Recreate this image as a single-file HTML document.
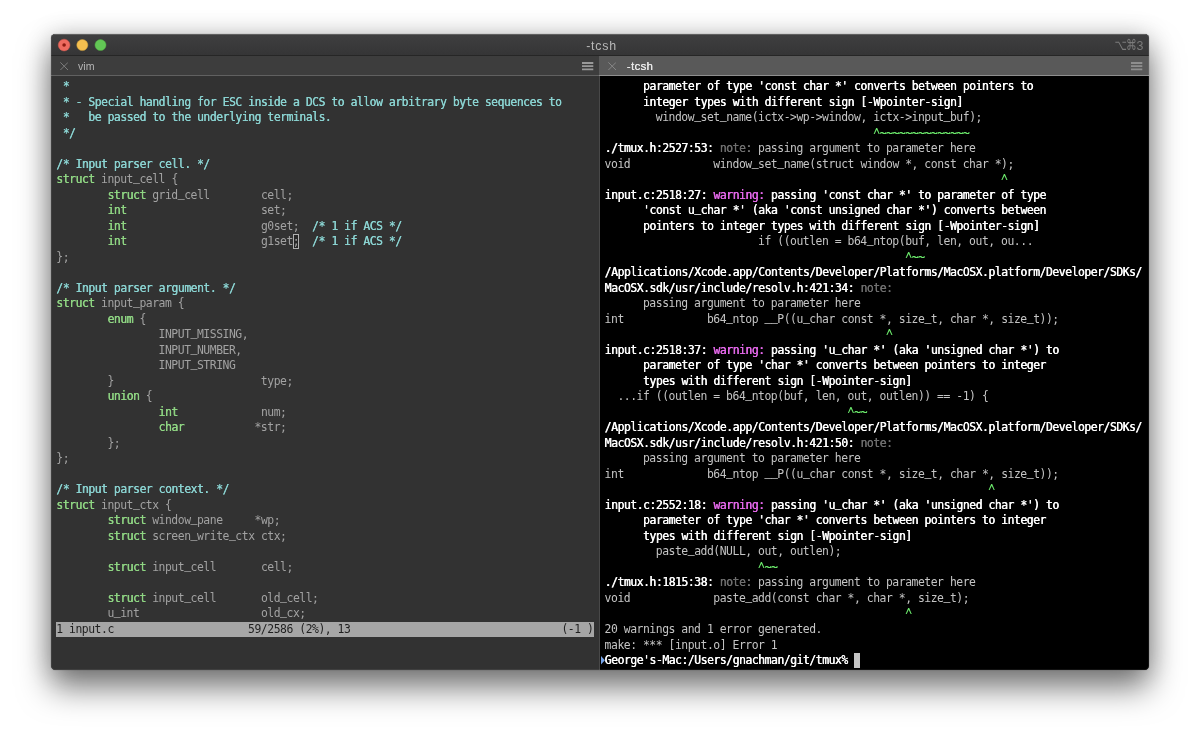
<!DOCTYPE html>
<html lang="en"><head><meta charset="utf-8"><title>-tcsh</title>
<style>
html,body{margin:0;padding:0;background:#fff;}
body{width:1200px;height:738px;position:relative;overflow:hidden;font-family:"Liberation Sans","DejaVu Sans",sans-serif;}
#win{position:absolute;left:51.2px;top:34.2px;width:1097.5px;height:636.1px;border-radius:4.5px;overflow:hidden;background:#323232;}
#shadow{position:absolute;left:51.2px;top:34.2px;width:1097.5px;height:636.1px;border-radius:4.5px;
 box-shadow:0 18px 32px rgba(0,0,0,.50),0 0 1px rgba(0,0,0,.55),0 1px 26px rgba(0,0,0,.20);}
#tbar{position:absolute;left:0;top:0;width:100%;height:21.8px;background:linear-gradient(#3f3f40,#353536);border-bottom:1px solid #262626;box-sizing:border-box;box-shadow:inset 0 1px 0 #555;}
#tls{position:absolute;left:0;top:0;}
#title{position:absolute;left:1.6px;width:100%;top:4.7px;text-align:center;font-size:12.4px;line-height:14px;color:#b8b8b8;letter-spacing:.75px;}
#kbd{position:absolute;right:5.4px;top:4.4px;font-size:12.4px;line-height:14px;color:#7b7b7b;white-space:nowrap;}
#kbd .sym{display:inline-block;font-family:"DejaVu Sans","Liberation Sans",sans-serif;font-size:11px;letter-spacing:-.8px;transform-origin:100% 78%;transform:scale(.98,1.36);margin-right:.6px;}
.pt{position:absolute;top:21.8px;height:20px;box-sizing:border-box;font-size:10.6px;line-height:19px;}
#pt1{left:0;width:548px;background:#3d3d3d;border-bottom:1px solid #616161;color:#b4b4b4;}
#pt2{left:547.8px;width:549.7px;background:#595959;border-bottom:1px solid #8f8f8f;color:#eaeaea;font-size:11.3px;}
.pt .nm{position:absolute;top:.9px;}
.pt svg{position:absolute;}
#lp{position:absolute;left:0;top:41.8px;width:548px;height:595px;background:#323232;}
#dv{position:absolute;left:547.8px;top:41.8px;width:1.3px;height:595px;background:#484848;}
#rp{position:absolute;left:549px;top:41.8px;width:549px;height:595px;background:#000;}
.ln{position:absolute;white-space:pre;font-family:"DejaVu Sans Mono", "Liberation Mono", monospace;font-size:11.400px;letter-spacing:-0.4634px;line-height:15.51px;height:15.51px;}
.c{color:#8ad3d1;text-shadow:.3px 0 0 #8ad3d1;}
.k{color:#8fd683;text-shadow:.3px 0 0 #8fd683;}
.n{color:#a2a2a2;}
.cur{color:#a2a2a2;}
.curbox{position:absolute;box-sizing:border-box;border:.9px solid #b0b0b0;background:rgba(0,0,0,.22);}
.status{position:absolute;height:15.51px;background:#a6a6a6;}
.st{color:#1f1f1f;}
.b{color:#fff;text-shadow:.4px 0 0 #fff;}
.r{color:#c4c4c4;}
.g{color:#6be86b;text-shadow:.35px 0 0 #6be86b;}
.gc{color:#6be86b;display:inline-block;transform-origin:50% 3.8px;transform:translateY(1.2px) scaleY(1.85);}
.m{color:#e468ea;text-shadow:.4px 0 0 #e468ea;}
.d{color:#6f6f6f;text-shadow:.35px 0 0 #6f6f6f;}
.blk{}
.pblk{position:absolute;background:#c4c4c4;}
#mark{position:absolute;}

#txt{position:absolute;left:0;top:0;width:1200px;height:738px;}
#edge{position:absolute;left:0;top:0;width:100%;height:100%;border-radius:4.5px;box-shadow:inset 0 0 0 .8px rgba(255,255,255,.09);pointer-events:none;}
#page{will-change:transform;position:absolute;left:0;top:0;width:1200px;height:738px;background:#fff;overflow:hidden;}
.u{position:relative;top:-2.1px;text-shadow:0 .45px 0 currentColor;}

</style></head>
<body>
<div id="page">
<div id="shadow"></div>
<div id="win">
 <div id="tbar">
  <svg id="tls" width="60" height="20" viewBox="0 0 60 20"><circle cx="13.1" cy="11.05" r="5.9" fill="#ee6a5f" stroke="#cf5a50" stroke-width=".5"/><circle cx="13.1" cy="11.05" r="1.8" fill="#8c1a10"/><circle cx="31.3" cy="11.05" r="5.55" fill="#f5bf4f" stroke="#d3a23f" stroke-width=".5"/><circle cx="49.5" cy="11.05" r="5.55" fill="#62c655" stroke="#52a845" stroke-width=".5"/></svg>
  <div id="title">-tcsh</div>
  <div id="kbd"><span class="sym">⌥⌘</span>3</div>
 </div>
 <div class="pt" id="pt1">
  <svg style="left:8.4px;top:6.3px" width="8.4" height="8.4" viewBox="0 0 9 9"><path d="M.4.4 8.6 8.6M8.6.4.4 8.6" stroke="#808080" stroke-width="1" fill="none"/></svg>
  <span class="nm" style="left:26.8px">vim</span>
  <svg style="left:530.5px;top:5.6px" width="12" height="9" viewBox="0 0 12 9"><path d="M0 1h11.3M0 4.2h11.3M0 7.4h11.3" stroke="#999" stroke-width="1.8" fill="none"/></svg>
 </div>
 <div class="pt" id="pt2">
  <svg style="left:8.8px;top:6.3px" width="8.4" height="8.4" viewBox="0 0 9 9"><path d="M.4.4 8.6 8.6M8.6.4.4 8.6" stroke="#8a8a8a" stroke-width="1" fill="none"/></svg>
  <span class="nm" style="left:27.8px;top:1.1px;letter-spacing:.35px;text-shadow:.25px 0 0 #eaeaea">-tcsh</span>
  <svg style="left:532.4px;top:5.6px" width="12" height="9" viewBox="0 0 12 9"><path d="M0 1h11.3M0 4.2h11.3M0 7.4h11.3" stroke="#8e8e8e" stroke-width="1.8" fill="none"/></svg>
 </div>
 <div id="lp"></div><div id="dv"></div><div id="rp"></div>
 <div id="edge"></div>
</div>
<div id="txt">
<div class="curbox" style="left:292.85px;top:233.55px;width:6.60px;height:15.51px"></div><div class="pblk" style="left:853.90px;top:652.52px;width:6.40px;height:15.51px"></div>
<div class="ln" style="top:79.15px;left:56.25px"><span class="c"> *</span></div>
<div class="ln" style="top:94.66px;left:56.25px"><span class="c"> * - Special handling for ESC inside a DCS to allow arbitrary byte sequences to</span></div>
<div class="ln" style="top:110.17px;left:56.25px"><span class="c"> *   be passed to the underlying terminals.</span></div>
<div class="ln" style="top:125.68px;left:56.25px"><span class="c"> */</span></div>
<div class="ln" style="top:156.70px;left:56.25px"><span class="c">/* Input parser cell. */</span></div>
<div class="ln" style="top:172.21px;left:56.25px"><span class="k">struct</span><span class="n"> input<span class="u">_</span>cell {</span></div>
<div class="ln" style="top:187.72px;left:56.25px"><span class="n">        </span><span class="k">struct</span><span class="n"> grid<span class="u">_</span>cell        cell;</span></div>
<div class="ln" style="top:203.23px;left:56.25px"><span class="n">        </span><span class="k">int</span><span class="n">                     set;</span></div>
<div class="ln" style="top:218.74px;left:56.25px"><span class="n">        </span><span class="k">int</span><span class="n">                     g0set;  </span><span class="c">/* 1 if ACS */</span></div>
<div class="ln" style="top:234.25px;left:56.25px"><span class="n">        </span><span class="k">int</span><span class="n">                     g1set</span><span class="cur">;</span><span class="n">  </span><span class="c">/* 1 if ACS */</span></div>
<div class="ln" style="top:249.76px;left:56.25px"><span class="n">};</span></div>
<div class="ln" style="top:280.78px;left:56.25px"><span class="c">/* Input parser argument. */</span></div>
<div class="ln" style="top:296.29px;left:56.25px"><span class="k">struct</span><span class="n"> input<span class="u">_</span>param {</span></div>
<div class="ln" style="top:311.80px;left:56.25px"><span class="n">        </span><span class="k">enum</span><span class="n"> {</span></div>
<div class="ln" style="top:327.31px;left:56.25px"><span class="n">                INPUT<span class="u">_</span>MISSING,</span></div>
<div class="ln" style="top:342.82px;left:56.25px"><span class="n">                INPUT<span class="u">_</span>NUMBER,</span></div>
<div class="ln" style="top:358.33px;left:56.25px"><span class="n">                INPUT<span class="u">_</span>STRING</span></div>
<div class="ln" style="top:373.84px;left:56.25px"><span class="n">        }                       type;</span></div>
<div class="ln" style="top:389.35px;left:56.25px"><span class="n">        </span><span class="k">union</span><span class="n"> {</span></div>
<div class="ln" style="top:404.86px;left:56.25px"><span class="n">                </span><span class="k">int</span><span class="n">             num;</span></div>
<div class="ln" style="top:420.37px;left:56.25px"><span class="n">                </span><span class="k">char</span><span class="n">           *str;</span></div>
<div class="ln" style="top:435.88px;left:56.25px"><span class="n">        };</span></div>
<div class="ln" style="top:451.39px;left:56.25px"><span class="n">};</span></div>
<div class="ln" style="top:482.41px;left:56.25px"><span class="c">/* Input parser context. */</span></div>
<div class="ln" style="top:497.92px;left:56.25px"><span class="k">struct</span><span class="n"> input<span class="u">_</span>ctx {</span></div>
<div class="ln" style="top:513.43px;left:56.25px"><span class="n">        </span><span class="k">struct</span><span class="n"> window<span class="u">_</span>pane     *wp;</span></div>
<div class="ln" style="top:528.94px;left:56.25px"><span class="n">        </span><span class="k">struct</span><span class="n"> screen<span class="u">_</span>write<span class="u">_</span>ctx ctx;</span></div>
<div class="ln" style="top:559.96px;left:56.25px"><span class="n">        </span><span class="k">struct</span><span class="n"> input<span class="u">_</span>cell       cell;</span></div>
<div class="ln" style="top:590.98px;left:56.25px"><span class="n">        </span><span class="k">struct</span><span class="n"> input<span class="u">_</span>cell       old<span class="u">_</span>cell;</span></div>
<div class="ln" style="top:606.49px;left:56.25px"><span class="n">        u<span class="u">_</span>int                   old<span class="u">_</span>cx;</span></div>
<div class="status" style="top:621.60px;left:56.05px;width:537.80px"></div><div class="ln" style="top:622.00px;left:56.25px"><span class="st">1 input.c                     59/2586 (2%), 13                                 (-1 )</span></div>
<div class="ln" style="top:79.15px;left:604.60px"><span class="b">      parameter of type 'const char *' converts between pointers to</span></div>
<div class="ln" style="top:94.66px;left:604.60px"><span class="b">      integer types with different sign [-Wpointer-sign]</span></div>
<div class="ln" style="top:110.17px;left:604.60px"><span class="r">        window<span class="u">_</span>set<span class="u">_</span>name(ictx-&gt;wp-&gt;window, ictx-&gt;input<span class="u">_</span>buf);</span></div>
<div class="ln" style="top:125.68px;left:604.60px"><span class="g">                                          </span><span class="gc">^</span><span class="g">~~~~~~~~~~~~~~</span></div>
<div class="ln" style="top:141.19px;left:604.60px"><span class="b">./tmux.h:2527:53: </span><span class="d">note:</span><span class="r"> passing argument to parameter here</span></div>
<div class="ln" style="top:156.70px;left:604.60px"><span class="r">void             window<span class="u">_</span>set<span class="u">_</span>name(struct window *, const char *);</span></div>
<div class="ln" style="top:172.21px;left:604.60px"><span class="g">                                                              </span><span class="gc">^</span></div>
<div class="ln" style="top:187.72px;left:604.60px"><span class="b">input.c:2518:27: </span><span class="m">warning:</span><span class="b"> passing 'const char *' to parameter of type</span></div>
<div class="ln" style="top:203.23px;left:604.60px"><span class="b">      'const u<span class="u">_</span>char *' (aka 'const unsigned char *') converts between</span></div>
<div class="ln" style="top:218.74px;left:604.60px"><span class="b">      pointers to integer types with different sign [-Wpointer-sign]</span></div>
<div class="ln" style="top:234.25px;left:604.60px"><span class="r">                        if ((outlen = b64<span class="u">_</span>ntop(buf, len, out, ou...</span></div>
<div class="ln" style="top:249.76px;left:604.60px"><span class="g">                                               </span><span class="gc">^</span><span class="g">~~</span></div>
<div class="ln" style="top:265.27px;left:604.60px"><span class="b">/Applications/Xcode.app/Contents/Developer/Platforms/MacOSX.platform/Developer/SDKs/</span></div>
<div class="ln" style="top:280.78px;left:604.60px"><span class="b">MacOSX.sdk/usr/include/resolv.h:421:34: </span><span class="d">note:</span></div>
<div class="ln" style="top:296.29px;left:604.60px"><span class="r">      passing argument to parameter here</span></div>
<div class="ln" style="top:311.80px;left:604.60px"><span class="r">int             b64<span class="u">_</span>ntop <span class="u">_</span><span class="u">_</span>P((u<span class="u">_</span>char const *, size<span class="u">_</span>t, char *, size<span class="u">_</span>t));</span></div>
<div class="ln" style="top:327.31px;left:604.60px"><span class="g">                                            </span><span class="gc">^</span></div>
<div class="ln" style="top:342.82px;left:604.60px"><span class="b">input.c:2518:37: </span><span class="m">warning:</span><span class="b"> passing 'u<span class="u">_</span>char *' (aka 'unsigned char *') to</span></div>
<div class="ln" style="top:358.33px;left:604.60px"><span class="b">      parameter of type 'char *' converts between pointers to integer</span></div>
<div class="ln" style="top:373.84px;left:604.60px"><span class="b">      types with different sign [-Wpointer-sign]</span></div>
<div class="ln" style="top:389.35px;left:604.60px"><span class="r">  ...if ((outlen = b64<span class="u">_</span>ntop(buf, len, out, outlen)) == -1) {</span></div>
<div class="ln" style="top:404.86px;left:604.60px"><span class="g">                                      </span><span class="gc">^</span><span class="g">~~</span></div>
<div class="ln" style="top:420.37px;left:604.60px"><span class="b">/Applications/Xcode.app/Contents/Developer/Platforms/MacOSX.platform/Developer/SDKs/</span></div>
<div class="ln" style="top:435.88px;left:604.60px"><span class="b">MacOSX.sdk/usr/include/resolv.h:421:50: </span><span class="d">note:</span></div>
<div class="ln" style="top:451.39px;left:604.60px"><span class="r">      passing argument to parameter here</span></div>
<div class="ln" style="top:466.90px;left:604.60px"><span class="r">int             b64<span class="u">_</span>ntop <span class="u">_</span><span class="u">_</span>P((u<span class="u">_</span>char const *, size<span class="u">_</span>t, char *, size<span class="u">_</span>t));</span></div>
<div class="ln" style="top:482.41px;left:604.60px"><span class="g">                                                            </span><span class="gc">^</span></div>
<div class="ln" style="top:497.92px;left:604.60px"><span class="b">input.c:2552:18: </span><span class="m">warning:</span><span class="b"> passing 'u<span class="u">_</span>char *' (aka 'unsigned char *') to</span></div>
<div class="ln" style="top:513.43px;left:604.60px"><span class="b">      parameter of type 'char *' converts between pointers to integer</span></div>
<div class="ln" style="top:528.94px;left:604.60px"><span class="b">      types with different sign [-Wpointer-sign]</span></div>
<div class="ln" style="top:544.45px;left:604.60px"><span class="r">        paste<span class="u">_</span>add(NULL, out, outlen);</span></div>
<div class="ln" style="top:559.96px;left:604.60px"><span class="g">                        </span><span class="gc">^</span><span class="g">~~</span></div>
<div class="ln" style="top:575.47px;left:604.60px"><span class="b">./tmux.h:1815:38: </span><span class="d">note:</span><span class="r"> passing argument to parameter here</span></div>
<div class="ln" style="top:590.98px;left:604.60px"><span class="r">void             paste<span class="u">_</span>add(const char *, char *, size<span class="u">_</span>t);</span></div>
<div class="ln" style="top:606.49px;left:604.60px"><span class="g">                                               </span><span class="gc">^</span></div>
<div class="ln" style="top:622.00px;left:604.60px"><span class="r">20 warnings and 1 error generated.</span></div>
<div class="ln" style="top:637.51px;left:604.60px"><span class="r">make: *** [input.o] Error 1</span></div>
<div class="ln" style="top:653.02px;left:604.60px"><span class="b">George's-Mac:/Users/gnachman/git/tmux% </span><span class="blk"> </span></div>
<svg id="mark" style="left:600.5px;top:656.1px" width="4" height="8.6" viewBox="0 0 4 8.6"><path d="M0 0 3.9 4.3 0 8.6z" fill="#76a4ea"/></svg>
</div>
</div>

</body></html>
